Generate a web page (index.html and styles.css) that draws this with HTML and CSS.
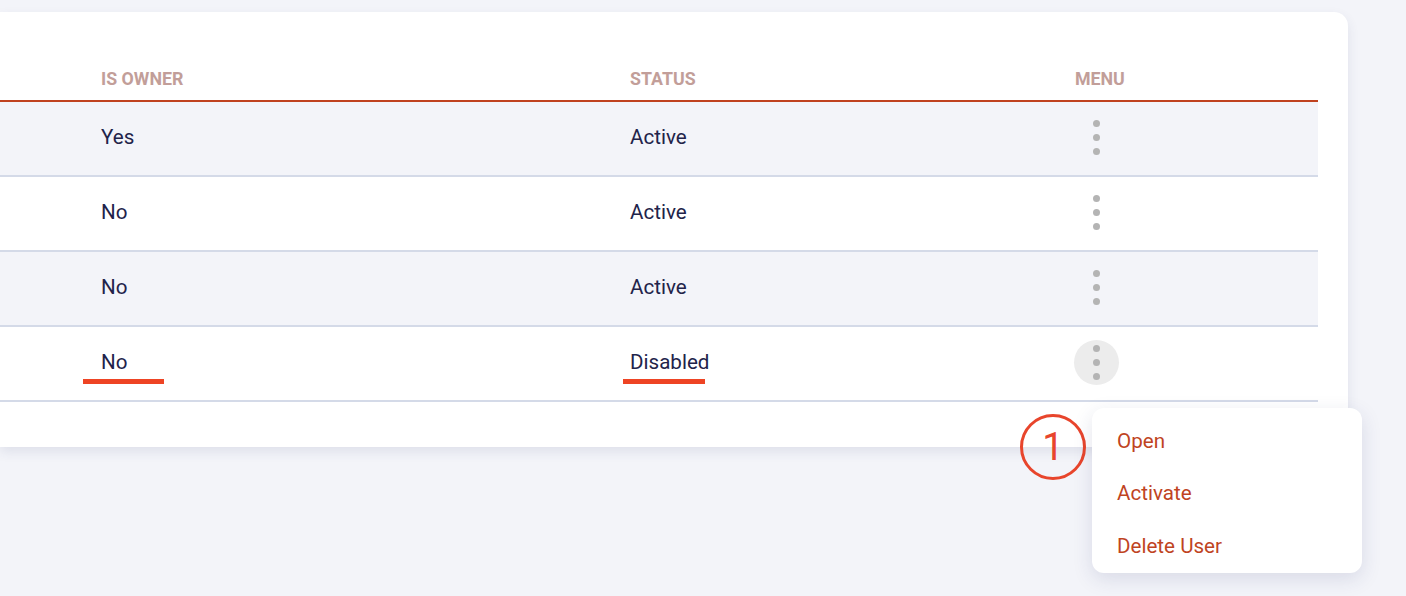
FILE: index.html
```html
<!DOCTYPE html>
<html lang="en">
<head>
<meta charset="utf-8">
<title>Users</title>
<link rel="stylesheet" href="styles.css">
</head>
<body>
<div class="page">
  <div class="card">
    <div class="table">
      <div class="row head">
        <div class="cell">IS OWNER</div>
        <div class="cell">STATUS</div>
        <div class="cell menu-head">MENU</div>
      </div>
      <div class="row striped">
        <div class="cell">Yes</div>
        <div class="cell">Active</div>
        <div class="cell"><button class="kebab" aria-label="Menu"><span></span><span></span><span></span></button></div>
      </div>
      <div class="row">
        <div class="cell">No</div>
        <div class="cell">Active</div>
        <div class="cell"><button class="kebab" aria-label="Menu"><span></span><span></span><span></span></button></div>
      </div>
      <div class="row striped">
        <div class="cell">No</div>
        <div class="cell">Active</div>
        <div class="cell"><button class="kebab" aria-label="Menu"><span></span><span></span><span></span></button></div>
      </div>
      <div class="row">
        <div class="cell"><span class="marked mark-owner">No</span></div>
        <div class="cell"><span class="marked mark-status">Disabled</span></div>
        <div class="cell"><button class="kebab active" aria-label="Menu"><span></span><span></span><span></span></button></div>
      </div>
    </div>
  </div>

  <div class="badge">1</div>

  <ul class="dropdown">
    <li>Open</li>
    <li>Activate</li>
    <li>Delete User</li>
  </ul>
</div>
</body>
</html>
```

FILE: styles.css
```css
* { box-sizing: border-box; }

html, body {
  margin: 0;
  padding: 0;
  background: #f3f4f9;
  font-family: Roboto, "Liberation Sans", Arial, sans-serif;
  color: #22234a;
}

.page {
  position: relative;
  width: 1406px;
  height: 596px;
  padding-top: 12px;
  overflow: hidden;
}

.card {
  width: 1348px;
  height: 435px;
  background: #ffffff;
  border-radius: 0 14px 14px 0;
  padding-right: 30px;
  box-shadow: 0 5px 12px rgba(45, 55, 110, 0.10);
}

.table {
  width: 1318px;
}

.row {
  display: grid;
  grid-template-columns: 529px 444px 1fr;
  padding-left: 101px;
  padding-bottom: 3px;
  height: 75px;
  align-items: center;
  border-bottom: 2px solid #d4dae8;
  font-size: 20.6px;
  line-height: 24px;
}

.row.striped {
  background: #f3f4f9;
}

.row.head {
  height: 90px;
  align-items: end;
  padding-bottom: 11px;
  border-bottom: 2px solid #c0421f;
  font-size: 17.8px;
  line-height: 20px;
  font-weight: 700;
  color: #c29e99;
}

.menu-head {
  padding-left: 1px;
}

.cell {
  position: relative;
}

.kebab {
  display: flex;
  flex-direction: column;
  align-items: center;
  justify-content: center;
  gap: 7px;
  width: 45px;
  height: 45px;
  padding: 0;
  margin: 0;
  border: none;
  border-radius: 50%;
  background: transparent;
}

.kebab span {
  display: block;
  width: 7px;
  height: 7px;
  border-radius: 50%;
  background: #b4b4b4;
}

.kebab.active {
  background: #ececec;
}

.marked {
  position: relative;
}

.marked::after {
  content: "";
  position: absolute;
  top: 29px;
  height: 5px;
  background: #ee4424;
}

.mark-owner::after {
  left: -18px;
  width: 81px;
}

.mark-status::after {
  left: -7px;
  width: 82px;
}

.badge {
  position: absolute;
  left: 1020px;
  top: 414px;
  width: 66px;
  height: 66px;
  border: 3px solid #e8452c;
  border-radius: 50%;
  color: #e8452c;
  font-size: 38px;
  line-height: 60px;
  text-align: center;
}

.dropdown {
  position: absolute;
  left: 1092px;
  top: 408px;
  width: 270px;
  height: 165px;
  margin: 0;
  padding: 7px 0 0;
  list-style: none;
  background: #ffffff;
  border-radius: 12px;
  box-shadow: 0 6px 20px rgba(40, 50, 110, 0.13);
}

.dropdown li {
  padding: 14px 25px;
  font-size: 20.6px;
  line-height: 24px;
  color: #c0441f;
}

.dropdown li:last-child {
  padding-top: 15px;
}
```
